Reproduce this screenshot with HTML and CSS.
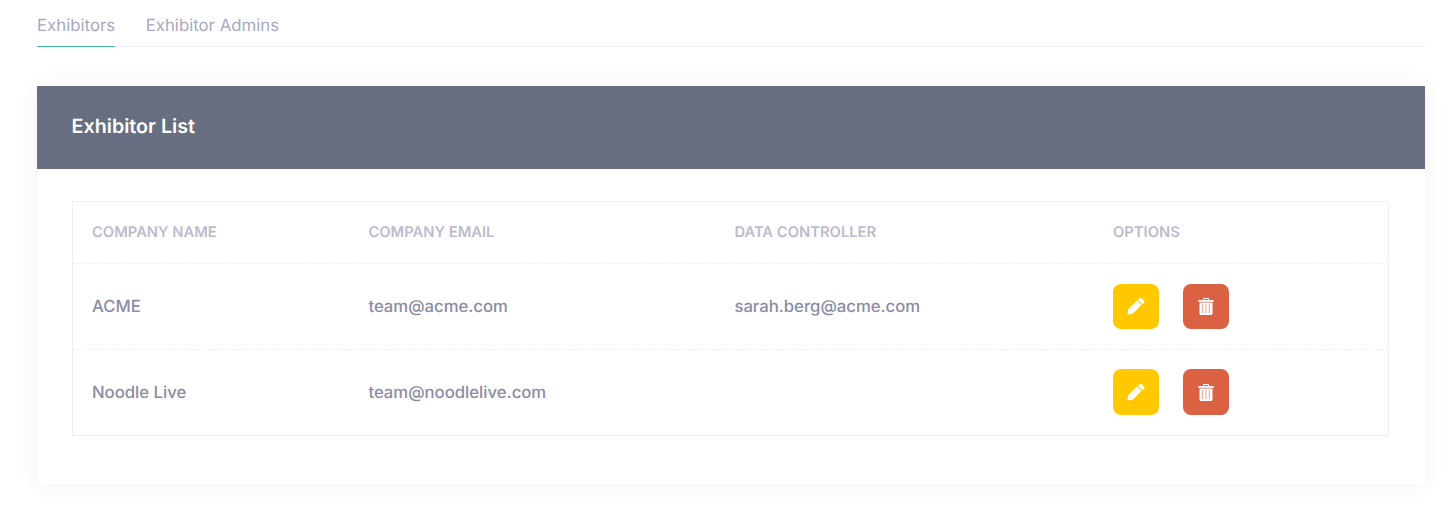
FILE: index.html
```html
<!doctype html>

<html>
<head>
    <meta charset="utf-8">
    <title>Exhibitors</title>
    <link rel="stylesheet" href="styles.css">
</head>

<body>
<nav class="tabs">
    <a class="tab tab-active" href="#">Exhibitors</a>
    <a class="tab" href="#">Exhibitor Admins</a>
</nav>

<section class="card">
    <h2 class="card-title">Exhibitor List</h2>
    <div class="card-body">
        <table class="list">
            <thead>
            <tr>
                <th class="col-name">Company Name</th>
                <th class="col-email">Company Email</th>
                <th class="col-controller">Data Controller</th>
                <th>Options</th>
            </tr>
            </thead>
            <tbody>
            <tr>
                <td>ACME</td>
                <td>team@acme.com</td>
                <td>sarah.berg@acme.com</td>
                <td class="cell-options">
                    <div class="options">
                        <a class="btn btn-edit" href="#">
                            <svg class="icon-edit" viewBox="0 0 18 17"><path d="M1.24 11.24L9.94 2.54l4.52 4.52-8.7 8.7L0.4 16.6zM10.74 1.74L12.2 0.5c0.9-0.7 2-0.7 2.8 0l1.9 1.9c0.7 0.8 0.7 1.9 0 2.8L15.26 6.26z"/><path class="icon-seam" d="M3.6 11.4l7-7M2.6 12.6l2.8 2.8"/></svg>
                        </a>
                        <a class="btn btn-delete" href="#">
                            <svg class="icon-trash" viewBox="0 0 16 17" fill-rule="evenodd"><path d="M5 2V1.2C5 0.5 5.5 0 6.2 0h3.6C10.5 0 11 0.5 11 1.2V2h4.2c0.3 0 0.5 0.2 0.5 0.5v1.3H0.3V2.5C0.3 2.2 0.5 2 0.8 2zM6.1 2h3.8V1.1H6.1zM1.5 4.6h13v10.9c0 0.8-0.7 1.5-1.5 1.5H3c-0.8 0-1.5-0.7-1.5-1.5zM4.5 6.2v9h0.6v-9zM7.7 6.2v9h0.6v-9zM10.9 6.2v9h0.6v-9z"/></svg>
                        </a>
                    </div>
                </td>
            </tr>
            <tr>
                <td>Noodle Live</td>
                <td>team@noodlelive.com</td>
                <td></td>
                <td class="cell-options">
                    <div class="options">
                        <a class="btn btn-edit" href="#">
                            <svg class="icon-edit" viewBox="0 0 18 17"><path d="M1.24 11.24L9.94 2.54l4.52 4.52-8.7 8.7L0.4 16.6zM10.74 1.74L12.2 0.5c0.9-0.7 2-0.7 2.8 0l1.9 1.9c0.7 0.8 0.7 1.9 0 2.8L15.26 6.26z"/><path class="icon-seam" d="M3.6 11.4l7-7M2.6 12.6l2.8 2.8"/></svg>
                        </a>
                        <a class="btn btn-delete" href="#">
                            <svg class="icon-trash" viewBox="0 0 16 17" fill-rule="evenodd"><path d="M5 2V1.2C5 0.5 5.5 0 6.2 0h3.6C10.5 0 11 0.5 11 1.2V2h4.2c0.3 0 0.5 0.2 0.5 0.5v1.3H0.3V2.5C0.3 2.2 0.5 2 0.8 2zM6.1 2h3.8V1.1H6.1zM1.5 4.6h13v10.9c0 0.8-0.7 1.5-1.5 1.5H3c-0.8 0-1.5-0.7-1.5-1.5zM4.5 6.2v9h0.6v-9zM7.7 6.2v9h0.6v-9zM10.9 6.2v9h0.6v-9z"/></svg>
                        </a>
                    </div>
                </td>
            </tr>
            </tbody>
        </table>
    </div>
</section>
</body>
</html>
```

FILE: styles.css
```css
* {
    box-sizing: border-box;
}
body {
    margin: 0;
    padding: 0 27px 21px 37px;
    background: #fff;
    color: #8a8ca5;
    font-family: Inter, "Liberation Sans", sans-serif;
    font-size: 16.7px;
    text-rendering: geometricPrecision;
}
.tabs {
    display: flex;
    gap: 30.5px;
    height: 47px;
    margin-bottom: 39px;
    border-bottom: 1px solid #ecedf1;
}
.tab {
    height: 47px;
    padding-top: 15px;
    color: #a8a9be;
    font-size: 16.8px;
    text-decoration: none;
    line-height: 22px;
}
.tab-active {
    border-bottom: 1px solid #45b5a5;
}
.card {
    width: 1388px;
    height: 398px;
    background: #fff;
    box-shadow: 0 0 20px rgba(60, 60, 80, 0.07);
}
.card-title {
    height: 83px;
    margin: 0;
    padding: 0 34.6px;
    background: #666e80;
    color: #fff;
    font-size: 19.7px;
    font-weight: 600;
    line-height: 81px;
}
.card-body {
    padding: 32px 36px 0 35px;
}
.list {
    width: 100%;
    border: 1px solid #eef0f3;
    border-collapse: separate;
    border-spacing: 0;
    table-layout: fixed;
}
.list th {
    height: 61.2px;
    padding: 0 19px 1px;
    color: #bbbccc;
    font-size: 14.75px;
    font-weight: 600;
    text-align: left;
    text-transform: uppercase;
}
.list td {
    height: 85.8px;
    padding: 1.4px 19px 0;
    border-top: 1px dashed #eef0f3;
    font-weight: 500;
}
.list .cell-options {
    padding: 0 19px 0.4px;
}
.col-name {
    width: 276.4px;
}
.col-email {
    width: 366px;
}
.col-controller {
    width: 378.6px;
}
.options {
    display: flex;
    gap: 24px;
}
.btn {
    display: flex;
    align-items: center;
    justify-content: center;
    width: 46px;
    height: 45.7px;
    border-radius: 8px;
}
.btn svg {
    fill: #fff;
}
.icon-edit {
    width: 18px;
    height: 17px;
}
.icon-seam {
    fill: none;
    stroke: #ffc800;
    stroke-opacity: 0.6;
    stroke-width: 0.5;
}
.icon-trash {
    width: 16px;
    height: 17px;
}
.btn-edit {
    background: #ffc800;
}
.btn-delete {
    background: #da6141;
}
```
